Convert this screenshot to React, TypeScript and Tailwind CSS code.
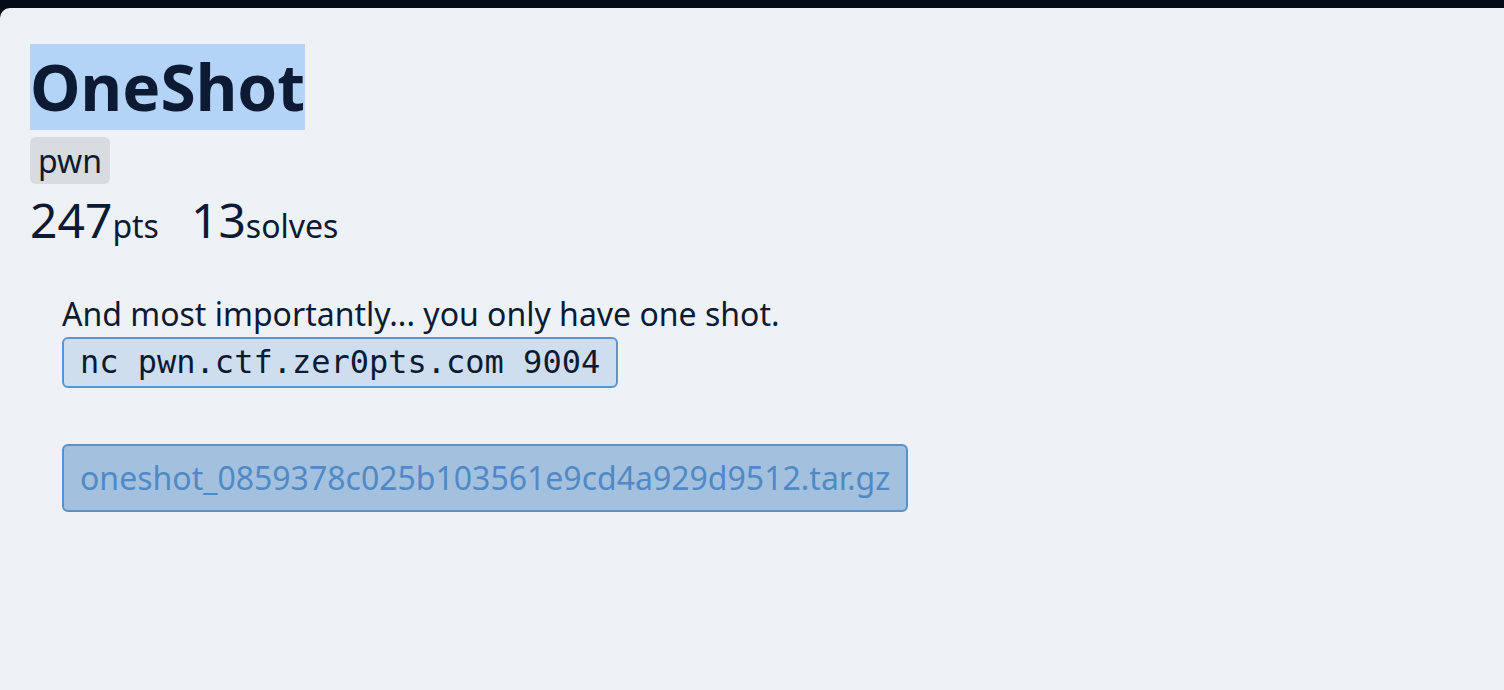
export default function App() {
  return (
    <div className="min-h-screen bg-[#050c18] pt-2" style={{ fontFamily: '"Noto Sans", "Open Sans", sans-serif' }}>
      <div className="min-h-[682px] rounded-tl-[10px] bg-[#eef2f7] px-[30px] pt-[36px] text-[#0c1a33]">
        <h1 className="inline-block bg-[#b3d3f7] text-[64px] font-bold leading-[86px]">OneShot</h1>
        <div className="mt-[7px]">
          <span className="inline-block rounded-md bg-[#d8dbe0] px-[8px] text-[32px] leading-[47px]">pwn</span>
        </div>
        <div className="mt-[6px] flex items-baseline gap-[32px] leading-[60px]">
          <span>
            <span className="text-[48px]">247</span>
            <span className="text-[32px]">pts</span>
          </span>
          <span>
            <span className="text-[48px]">13</span>
            <span className="text-[32px]">solves</span>
          </span>
        </div>
        <div className="mt-[30px] pl-[32px]">
          <p className="text-[32px] leading-[43px]">And most importantly... you only have one shot.</p>
          <div className="mt-[2px]">
            <code
              className="inline-block rounded-md border-2 border-[#5b95cf] bg-[#cfdeee] px-[16px] text-[32px] leading-[47px]"
              style={{ fontFamily: '"DejaVu Sans Mono", monospace' }}
            >
              nc pwn.ctf.zer0pts.com 9004
            </code>
          </div>
          <div className="mt-[56px]">
            <a className="inline-block rounded-md border-2 border-[#5b91c9] bg-[#a3c1df] px-[16px] text-[32px] leading-[64px] text-[#4f8ac6]">
              oneshot_0859378c025b103561e9cd4a929d9512.tar.gz
            </a>
          </div>
        </div>
      </div>
    </div>
  );
}
